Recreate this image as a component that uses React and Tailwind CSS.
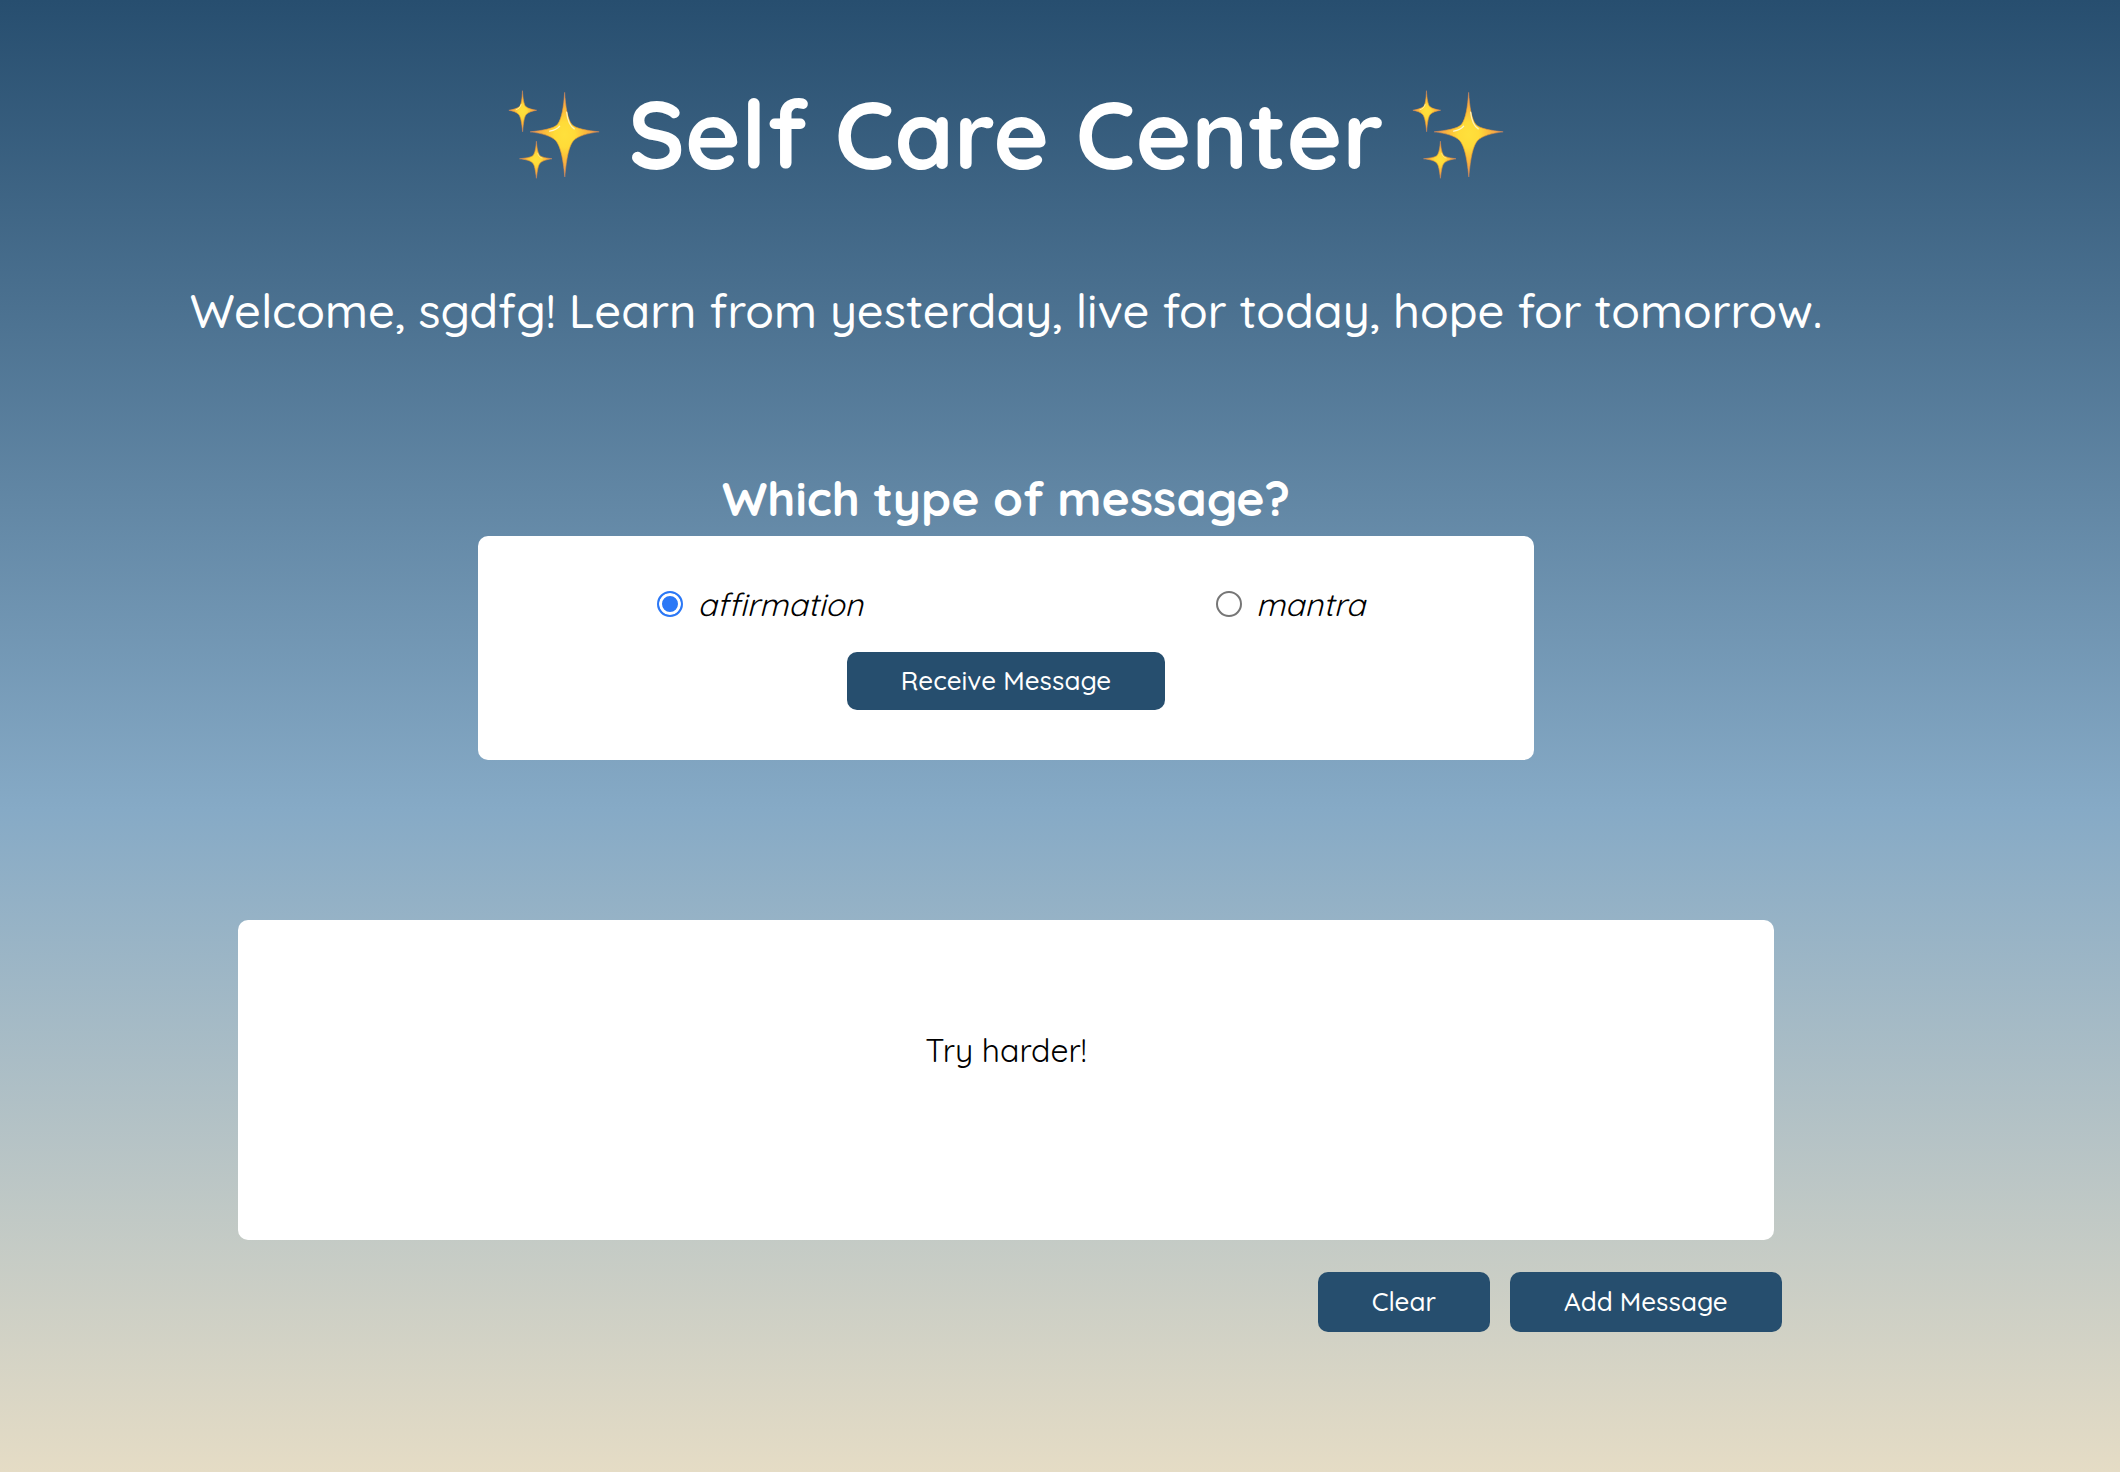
import { useId } from "react";

function Sparkles() {
  const id = useId();
  const fill = `url(#${id}glow)`;
  const edge = `url(#${id}edge)`;
  return (
    <svg viewBox="51 61 276 268" className="h-[89px] w-[92px] shrink-0" role="img" aria-label="sparkles">
      <defs>
        <radialGradient id={`${id}glow`}>
          <stop offset="0" stopColor="#ffe03c" />
          <stop offset="0.3" stopColor="#ffdb38" />
          <stop offset="0.6" stopColor="#fbb93c" />
          <stop offset="1" stopColor="#e8905a" />
        </radialGradient>
        <radialGradient id={`${id}edge`}>
          <stop offset="0" stopColor="#f3b02c" />
          <stop offset="0.5" stopColor="#f09a2e" />
          <stop offset="1" stopColor="#d98a5c" stopOpacity="0.7" />
        </radialGradient>
      </defs>
      <g fill={fill} stroke={edge} strokeWidth="2" strokeLinejoin="round">
        <path d="M221 68C224 112 229 146 242 164C254 178 290 183 325 187C290 191 262 199 248 213C234 230 227 262 221.500 323C216 262 208 230 194 213C180 199 152 191 117 187C152 183 188 178 200 164C213 146 218 112 221 68Z" />
        <path d="M94 63C95.500 88 98 104 104 111C110 117 124 120 137 122C124 124 111 128 105 135C99 143 97 158 94.500 187C92 158 89 143 83 135C77 128 65 124 53 122C65 120 79 117 85 111C91 104 93 88 94 63Z" />
        <path d="M136 215C137.500 236 140 250 146 258C152 264 168 266 183 268C168 270 153 274 147 281C141 288 139 302 136 327C133 302 131 288 125 281C119 274 104 270 85 268C104 266 120 264 126 258C132 250 134.500 236 136 215Z" />
      </g>
      <path d="M227 128C230 152 236 170 250 178" fill="none" stroke="#fff3b8" strokeWidth="4" strokeLinecap="round" />
      <path d="M206 170C199 179 188 183 176 185" fill="none" stroke="#fff6cf" strokeWidth="4" strokeLinecap="round" />
      <path d="M90 105C88 113 82 118 75 120" fill="none" stroke="#fff0a8" strokeWidth="3" strokeLinecap="round" />
      <path d="M140 252C142 260 147 264 153 266" fill="none" stroke="#fff0a8" strokeWidth="2" strokeLinecap="round" />
    </svg>
  );
}

function Choice({ value, defaultChecked }) {
  return (
    <label className="flex items-center gap-3.5 text-[32px] leading-10 font-normal text-black italic">
      <input
        type="radio"
        name="message-type"
        value={value}
        defaultChecked={defaultChecked}
        className="size-[26px] appearance-none rounded-full border-2 border-[#767676] bg-white checked:border-[#2b78f6] checked:bg-[#2b78f6] checked:shadow-[inset_0_0_0_3px_white]"
      />
      {value}
    </label>
  );
}

function Button({ children, className }) {
  return (
    <button
      type="button"
      className={`cursor-pointer rounded-[10px] bg-[#264e6e] px-[54px] text-[26px] leading-[34px] font-medium text-white ${className}`}
    >
      {children}
    </button>
  );
}

export default function App() {
  return (
    <div className="flex min-h-screen flex-col items-center bg-linear-[180deg,#274e6f_0%,#86aac6_55%,#e5dcc5_100%] pt-[74px] pr-[108px] pb-[140px] font-['Quicksand','Lato',sans-serif] text-white">
      <h1 className="flex items-center justify-center gap-7 text-[95px] leading-[120px] font-bold whitespace-nowrap">
        <Sparkles />
        Self Care Center
        <Sparkles />
      </h1>

      <p className="mt-[87px] text-center text-[47px] leading-[60px] font-medium">
        Welcome, sgdfg! Learn from yesterday, live for today, hope for tomorrow.
      </p>

      <form className="mt-[127px] w-[52.5%] text-center">
        <h2 className="text-5xl leading-[60px] font-bold">Which type of message?</h2>
        <div className="mt-2 rounded-[10px] bg-white pt-12 pb-[50px]">
          <div className="flex justify-between pr-[16%] pl-[17%]">
            <Choice value="affirmation" defaultChecked />
            <Choice value="mantra" />
          </div>
          <Button className="mt-7 py-3">Receive Message</Button>
        </div>
      </form>

      <section className="mt-40 flex min-h-80 w-[76.3%] justify-center rounded-[10px] bg-white pt-[110px]">
        <p className="text-[32px] leading-10 text-black">Try harder!</p>
      </section>

      <div className="mt-8 flex w-[77.1%] justify-end gap-5">
        <Button className="py-[13px]">Clear</Button>
        <Button className="py-[13px]">Add Message</Button>
      </div>
    </div>
  );
}
